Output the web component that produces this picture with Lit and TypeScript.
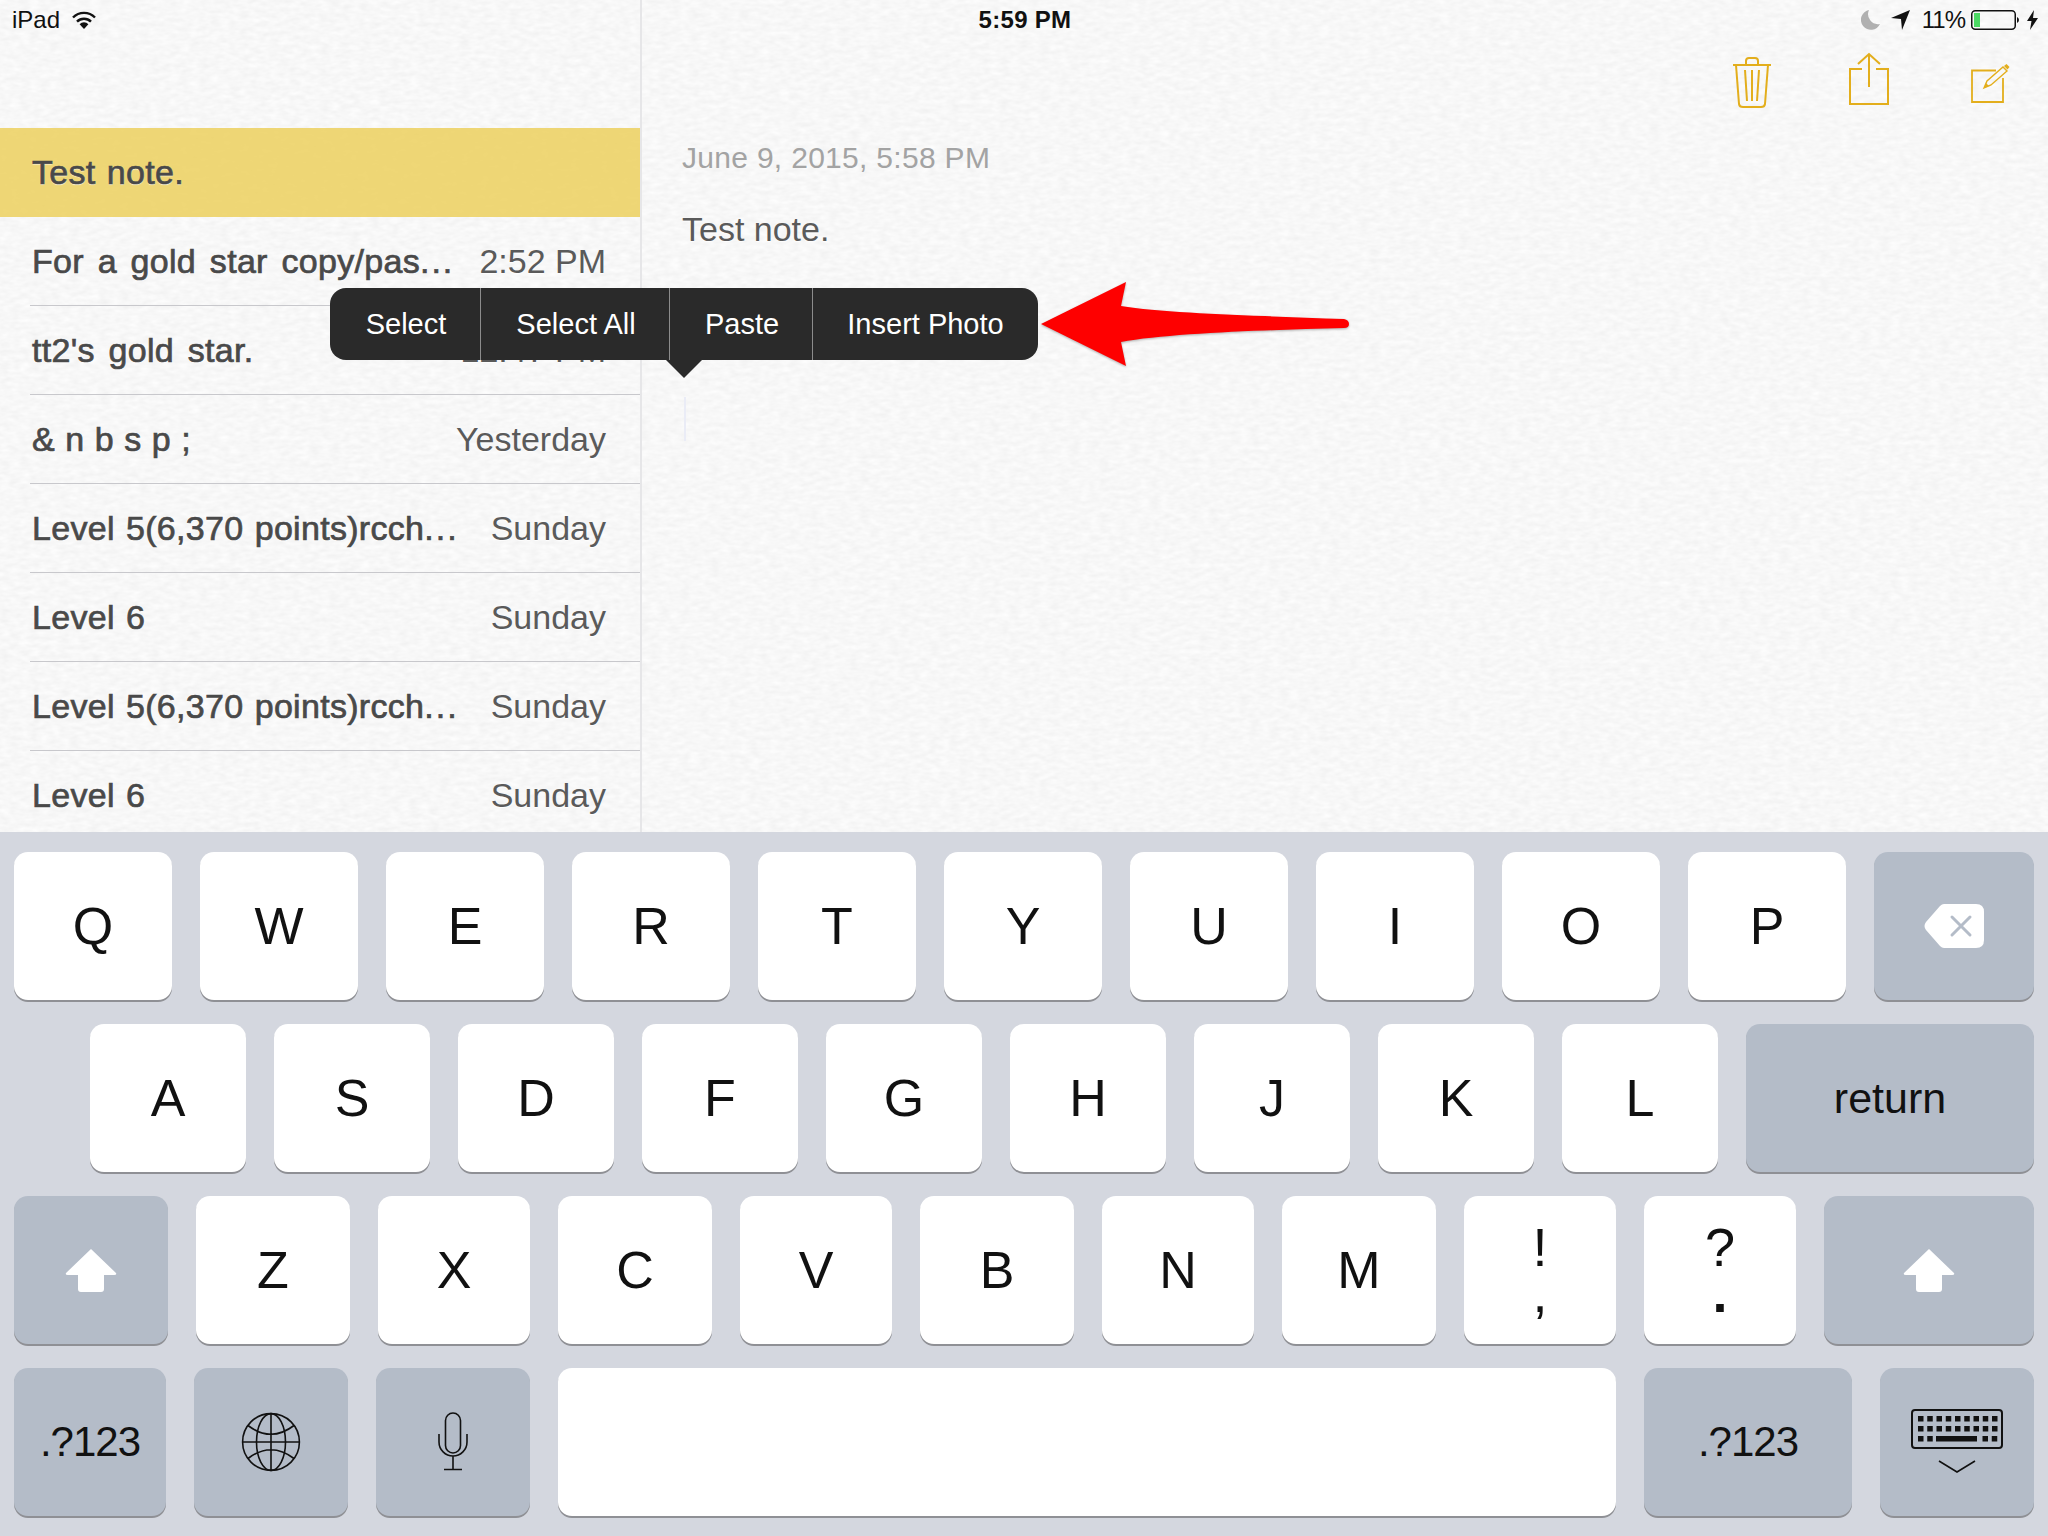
import { LitElement, html, css, svg } from "lit";
import { customElement } from "lit/decorators.js";

const notes = [
  { t: "Test note.", d: "", sel: true },
  { t: "For a gold star copy/pas", more: true, d: "2:52 PM", ws: "wide" },
  { t: "tt2's gold star.", d: "12:47 PM", ws: "wide" },
  { t: "& n b s p ;", d: "Yesterday", ws: "tight" },
  { t: "Level 5(6,370 points)rcch", more: true, d: "Sunday" },
  { t: "Level 6", d: "Sunday" },
  { t: "Level 5(6,370 points)rcch", more: true, d: "Sunday" },
  { t: "Level 6", d: "Sunday" },
];

const row3 = [
  { c: "Z", w: "w154" }, { c: "X", w: "w152" }, { c: "C", w: "w154" }, { c: "V", w: "w152" },
  { c: "B", w: "w154" }, { c: "N", w: "w152" }, { c: "M", w: "w154" },
];

const shiftIcon = html`<svg width="52" height="44" viewBox="0 0 52 44"><path d="M26 1 L51 25 Q52 27 49 27 H39 V41 Q39 44 36 44 H16 Q13 44 13 41 V27 H3 Q0 27 1 25 Z" fill="#fff"/></svg>`;

const globe = html`<svg width="60" height="60" viewBox="0 0 60 60" fill="none" stroke="#111" stroke-width="1.6">
  <circle cx="30" cy="30" r="28.4"/>
  <ellipse cx="30" cy="30" rx="14.5" ry="28.4"/>
  <path d="M30 1.6V58.4M1.6 30H58.4M7 13.5Q30 31 53 13.5M7 46.5Q30 29 53 46.5"/>
</svg>`;

const mic = html`<svg width="30" height="60" viewBox="0 0 30 60" fill="none" stroke="#111" stroke-width="1.6">
  <rect x="7.5" y="1" width="15" height="40" rx="7.5"/>
  <path d="M1 22V30A14 14 0 0 0 29 30V22M15 44V57M6 57.5H24"/>
</svg>`;

const kbdSquares = () => {
  const out = [];
  for (let r = 0; r < 2; r++)
    for (let c = 0; c < 9; c++)
      out.push(svg`<rect x="${7 + c * 9.25}" y="${7 + r * 10}" width="5.5" height="5.5"/>`);
  for (const x of [7, 16.25, 71.5, 80.75])
    out.push(svg`<rect x="${x}" y="27" width="5.5" height="5.5"/>`);
  out.push(svg`<rect x="25" y="27" width="41" height="5.5"/>`);
  return out;
};

const keyboardIcon = html`<svg width="92" height="66" viewBox="0 0 92 66">
  <rect x="1" y="1" width="90" height="38" rx="3" fill="none" stroke="#111" stroke-width="2"/>
  <g fill="#111">${kbdSquares()}</g>
  <path d="M28 52L46 63L64 52" fill="none" stroke="#111" stroke-width="1.6"/>
</svg>`;

const backspace = html`<svg width="60" height="44" viewBox="0 0 60 44">
  <path d="M20 0H52Q60 0 60 8V36Q60 44 52 44H20Q18 44 16 42L2 26Q-1 22 2 18L16 2Q18 0 20 0Z" fill="#fff"/>
  <path d="M28 13L46 31M46 13L28 31" stroke="#b4bcc8" stroke-width="3" stroke-linecap="round"/>
</svg>`;

@customElement("app-root")
export class AppRoot extends LitElement {
  static styles = css`
    :host { display: block; width: 2048px; height: 1536px; overflow: hidden; font-family: "Liberation Sans", Arial, sans-serif; }
    .screen { position: relative; width: 2048px; height: 1536px; display: flex; flex-direction: column; }
    .paper { position: absolute; left: 0; top: 0; width: 2048px; height: 832px; z-index: 0; }
    .main { position: relative; height: 832px; display: flex; overflow: hidden; }

    .status { position: absolute; z-index: 2; left: 0; top: 0; width: 2048px; height: 40px; display: grid; grid-template-columns: 1fr auto 1fr; align-items: center; font-size: 24px; color: #111; padding: 0 10px 0 12px; box-sizing: border-box; }
    .st-left { display: flex; align-items: center; gap: 12px; }
    .st-right { display: flex; align-items: center; justify-content: flex-end; }
    .clock { font-size: 24px; font-weight: 700; letter-spacing: .3px; }
    .pct { margin: 0 6px 0 12px; letter-spacing: -1px; }
    .loc { margin-left: 10px; }
    .bolt { margin-left: 8px; }

    .side { position: relative; z-index: 1; width: 640px; flex: none; border-right: 2px solid #e6e6e8; padding-top: 128px; box-sizing: content-box; }
    .row { height: 89px; box-sizing: border-box; display: flex; align-items: center; justify-content: space-between; padding: 0 34px 0 32px; position: relative; font-size: 34px; color: #555; }
    .row.sel { background: rgba(236, 208, 94, .85); }
    .row:not(.sel)::after { content: ""; position: absolute; left: 30px; right: 0; bottom: 0; height: 1px; background: #c8c8cc; }
    .title { color: #494949; letter-spacing: .3px; word-spacing: 1.5px; -webkit-text-stroke: .7px #494949; text-shadow: 0 1px 1px rgba(255,255,255,.8); white-space: nowrap; }
    .title.wide { word-spacing: 4px; }
    .title.tight { word-spacing: .5px; }
    .more { letter-spacing: 2px; }
    .date { color: #5a5a5a; text-shadow: 0 1px 0 rgba(255,255,255,.8); white-space: nowrap; }

    .detail { position: relative; z-index: 1; flex: 1; display: flex; flex-direction: column; padding: 0 40px; }
    .tools { display: flex; justify-content: flex-end; align-items: flex-start; height: 144px; padding-top: 52px; box-sizing: border-box; margin-right: -22px; }
    .tools svg { display: block; }
    .stamp { font-size: 30px; color: #a3a3a3; letter-spacing: .3px; line-height: 36px; margin-top: -4px; }
    .body { font-size: 34px; color: #5a5a5a; margin-top: 33px; line-height: 40px; text-shadow: 0 1px 0 rgba(255,255,255,.8); }
    .caret { width: 2px; height: 44px; background: #eaecf6; margin: 148px 0 0 2px; }

    .menu { position: absolute; z-index: 3; left: 330px; top: 288px; height: 72px; display: flex; background: #2a2a2a; border-radius: 16px; color: #fff; font-size: 29px; }
    .menu div { display: flex; align-items: center; justify-content: center; border-left: 1px solid #8c8c8c; box-sizing: border-box; }
    .menu div:first-child { border-left: 0; }
    .m1 { width: 150px; padding-left: 2px; } .m2 { width: 189px; padding-left: 2px; } .m3 { width: 143px; padding-left: 2px; } .m4 { width: 226px; }
    .tip { position: absolute; z-index: 3; left: 666px; top: 360px; }
    .arrow { position: absolute; z-index: 3; left: 1040px; top: 278px; filter: drop-shadow(0 1px 1px rgba(0,0,0,.3)); }

    .kb { height: 704px; box-sizing: border-box; background: #d4d7df; padding: 20px 14px 0; display: flex; flex-direction: column; gap: 24px; position: relative; }
    .kr { display: flex; gap: 28px; height: 148px; }
    .kr.r2 { padding-left: 76px; }
    .k { height: 148px; box-sizing: border-box; border-radius: 14px; background: #fff; box-shadow: 0 2px 0 #8f9095; display: flex; align-items: center; justify-content: center; font-size: 52px; color: #111; flex: none; }
    .k.g { background: #b4bcc8; }
    .k.grow { flex: 1; }
    .w158 { width: 158px; } .w156 { width: 156px; } .w154 { width: 154px; }
    .w152 { width: 152px; } .w208 { width: 208px; } .w1058 { width: 1058px; }
    .small { font-size: 42px; letter-spacing: -1px; }
    .ret { font-size: 43px; }
    .punct { flex-direction: column; font-size: 54px; line-height: 44px; }
    .punct span:last-child { margin-top: 2px; }
    .punct .dot { font-weight: 700; }
  `;

  render() {
    return html`<div class="screen">
      <div class="main">
        <svg class="paper" aria-hidden="true">
          <filter id="pp" x="0" y="0" width="100%" height="100%" color-interpolation-filters="sRGB">
            <feTurbulence type="fractalNoise" baseFrequency="0.1 0.22" numOctaves="2" seed="4"/>
            <feColorMatrix type="matrix" values="0.06 0 0 0 0.94  0.06 0 0 0 0.94  0.06 0 0 0 0.94  0 0 0 0 1"/>
          </filter>
          <rect width="2048" height="832" filter="url(#pp)"/>
        </svg>
        <div class="side">
          ${notes.map((n) => html`<div class="row ${n.sel ? "sel" : ""}">
            <span class="title ${n.ws ?? ""}">${n.t}${n.more ? html`<span class="more">...</span>` : ""}</span><span class="date">${n.d}</span>
          </div>`)}
        </div>
        <div class="detail">
          <div class="tools">
            ${this.toolIcons()}
          </div>
          <div class="stamp">June 9, 2015, 5:58 PM</div>
          <div class="body">Test note.</div>
          <div class="caret"></div>
        </div>
        <div class="status">
          <div class="st-left">
            <span>iPad</span>
            <svg width="24" height="18" viewBox="0 0 24 18" fill="none" stroke="#111" stroke-width="2.4">
              <path d="M1 6.5A15.5 15.5 0 0 1 23 6.5"/>
              <path d="M5 10.7A9.8 9.8 0 0 1 19 10.7"/>
              <path d="M12 18L7.6 13.2A6 6 0 0 1 16.4 13.2Z" fill="#111" stroke="none"/>
            </svg>
          </div>
          <div class="clock">5:59 PM</div>
          <div class="st-right">
            <svg width="20" height="20" viewBox="0 0 20 20"><path d="M8 0A10 10 0 1 0 19 14A10 10 0 0 1 8 0Z" fill="#b0b0b0"/></svg>
            <svg class="loc" width="19" height="20" viewBox="0 0 19 20"><path d="M0 8L19 0L11 20L10 9Z" fill="#111"/></svg>
            <span class="pct">11%</span>
            <svg width="48" height="20" viewBox="0 0 48 20">
              <rect x=".75" y=".75" width="43.5" height="18.5" rx="3.5" fill="none" stroke="#111" stroke-width="1.5"/>
              <rect x="3" y="3" width="6" height="14" fill="#4cd964"/>
              <path d="M46 7Q48 8 48 10Q48 12 46 13Z" fill="#111"/>
            </svg>
            <svg class="bolt" width="11" height="20" viewBox="0 0 11 20"><path d="M7 0L0 11H4.5L3 20L11 8H6Z" fill="#111"/></svg>
          </div>
        </div>
      </div>
      <div class="menu">
        <div class="m1">Select</div><div class="m2">Select All</div><div class="m3">Paste</div><div class="m4">Insert Photo</div>
      </div>
      <svg class="tip" width="36" height="18" viewBox="0 0 36 18"><path d="M0 0H36L18 18Z" fill="#2a2a2a"/></svg>
      <svg class="arrow" width="312" height="92" viewBox="0 0 312 92">
        <path d="M1 46L86 4L81 28C130 36 230 38 304 41Q309 42 309 46Q309 50 304 50C230 52 130 55 81 64L86 88Z" fill="#fe0000"/>
      </svg>
      <div class="kb">
        <div class="kr">
          ${"QWERTYUIOP".split("").map((c) => html`<div class="k w158">${c}</div>`)}
          <div class="k g grow">${backspace}</div>
        </div>
        <div class="kr r2">
          ${"ASDFGHJKL".split("").map((c) => html`<div class="k w156">${c}</div>`)}
          <div class="k g grow ret">return</div>
        </div>
        <div class="kr">
          <div class="k g w154">${shiftIcon}</div>
          ${row3.map((k) => html`<div class="k ${k.w}">${k.c}</div>`)}
          <div class="k w152 punct"><span>!</span><span>,</span></div>
          <div class="k w152 punct"><span>?</span><span class="dot">.</span></div>
          <div class="k g grow">${shiftIcon}</div>
        </div>
        <div class="kr">
          <div class="k g w152 small">.?123</div>
          <div class="k g w154">${globe}</div>
          <div class="k g w154">${mic}</div>
          <div class="k w1058"></div>
          <div class="k g w208 small">.?123</div>
          <div class="k g grow">${keyboardIcon}</div>
        </div>
      </div>
    </div>`;
  }

  toolIcons() {
    return html`<svg width="330" height="62" viewBox="0 0 330 62" fill="none" stroke="#e3ae1c" stroke-width="2">
      <g transform="translate(33,6)">
        <path d="M0 7H38M13 7V3Q13 0 16 0H22Q25 0 25 3V7"/>
        <path d="M3 7L6 46Q6.5 49 10 49H28Q31.5 49 32 46L35 7" />
        <path d="M12 12L14 43M19 12V43M26 12L24 43"/>
      </g>
      <g transform="translate(150,1)">
        <path d="M19 1V34M8 11L19 1L30 11M12 16H0V51H38V16H26"/>
      </g>
      <g transform="translate(271,12)">
        <path d="M25 6.5H1V38H32V14" stroke-width="1.8"/>
        <path d="M13 24L16 17L32 3L36 7L20 21Z" stroke-width="1.4"/>
        <path d="M33 2L35.500 0L38.500 3L36.500 5.500Z" fill="#e3ae1c" stroke="none"/>
        <path d="M13 24L15 19L18 22Z" fill="#e3ae1c" stroke="none"/>
      </g>
    </svg>`;
  }
}
